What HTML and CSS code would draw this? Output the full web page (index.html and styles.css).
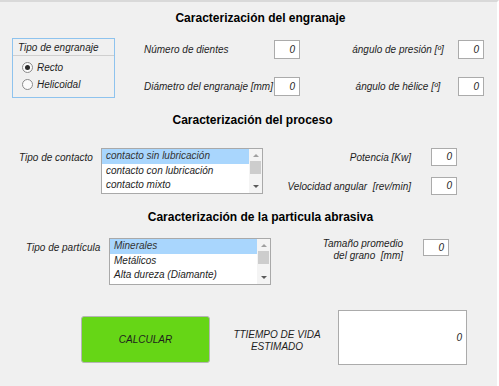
FILE: index.html
```html
<!DOCTYPE html>
<html lang="es">
<head>
<meta charset="utf-8">
<title>Tiempo de vida del engranaje</title>
<link rel="stylesheet" href="styles.css">
</head>
<body>
<div class="app">
  <h2 class="title t1">Caracterización del engranaje</h2>
  <div class="row r1">
    <div class="panel">
      <div class="panel-head">Tipo de engranaje</div>
      <label class="radio"><span class="dot checked"></span>Recto</label>
      <label class="radio"><span class="dot"></span>Helicoidal</label>
    </div>
    <div class="fields mid">
      <div class="field"><span class="lbl">Número de dientes</span><span class="num">0</span></div>
      <div class="field"><span class="lbl">Diámetro del engranaje [mm]</span><span class="num">0</span></div>
    </div>
    <div class="fields right1">
      <div class="field"><span class="lbl center">ángulo de presión [º]</span><span class="num">0</span></div>
      <div class="field"><span class="lbl center">ángulo de hélice [º]</span><span class="num">0</span></div>
    </div>
  </div>

  <h2 class="title t2">Caracterización del proceso</h2>
  <div class="row r2">
    <span class="side-lbl sl2">Tipo de contacto</span>
    <div class="listbox">
      <ul class="items">
        <li class="sel">contacto sin lubricación</li>
        <li>contacto con lubricación</li>
        <li>contacto mixto</li>
      </ul>
      <div class="scroll"><span class="arr up"></span><span class="thumb"></span><span class="arr down"></span></div>
    </div>
    <div class="fields right2">
      <div class="field"><span class="lbl rt">Potencia [Kw]</span><span class="num">0</span></div>
      <div class="field"><span class="lbl rt">Velocidad angular&nbsp; [rev/min]</span><span class="num">0</span></div>
    </div>
  </div>

  <h2 class="title t3">Caracterización de la particula abrasiva</h2>
  <div class="row r3">
    <span class="side-lbl sl3">Tipo de partícula</span>
    <div class="listbox lb3">
      <ul class="items">
        <li class="sel">Minerales</li>
        <li>Metálicos</li>
        <li>Alta dureza (Diamante)</li>
      </ul>
      <div class="scroll"><span class="arr up"></span><span class="thumb"></span><span class="arr down"></span></div>
    </div>
    <div class="field right3">
      <span class="lbl rt two">Tamaño promedio<br>del grano&nbsp; [mm]</span><span class="num">0</span>
    </div>
  </div>

  <div class="row r4">
    <button class="calc">CALCULAR</button>
    <span class="out-lbl">TTIEMPO DE VIDA<br>ESTIMADO</span>
    <div class="out">0</div>
  </div>
</div>
</body>
</html>
```

FILE: styles.css
```css
* { box-sizing: border-box; }
html, body { margin: 0; padding: 0; background: #f0f0f0; }
body { width: 499px; height: 386px; overflow: hidden; }

.app {
  width: 499px;
  height: 386px;
  background: #f0f0f0;
  border-top: 2px solid #d9d9d9;
  border-right: 2px solid #ffffff;
  font-family: "Liberation Sans", Arial, sans-serif;
  font-size: 10px;
  color: #1e1e1e;
}

.title {
  margin: 0;
  font-size: 12px;
  font-weight: bold;
  line-height: 14px;
  height: 14px;
  color: #000;
  text-align: center;
  white-space: nowrap;
}
.t1 { margin-top: 9px; padding-left: 24px; }
.t2 { margin-top: 15px; padding-left: 8px; }
.t3 { margin-top: 15px; padding-left: 24px; }

.row { display: flex; align-items: flex-start; }

/* Section 1 */
.r1 { margin-top: 13px; padding-left: 12px; height: 60px; }
.panel {
  width: 103px;
  height: 60px;
  border: 1px solid #8ec3ee;
  background: #f0f0f0;
}
.panel-head {
  height: 17px;
  line-height: 17px;
  padding-left: 5px;
  font-style: italic;
  border-bottom: 1px solid #cfcfcf;
}
.radio {
  display: flex;
  align-items: center;
  height: 17px;
  padding-left: 9px;
  font-style: italic;
}
.radio:first-of-type { margin-top: 3px; }
.dot {
  width: 11px;
  height: 11px;
  border-radius: 50%;
  border: 1px solid #8a8a8a;
  background: #fbfbfb;
  margin-right: 4px;
  position: relative;
  flex: none;
}
.dot.checked::after {
  content: "";
  position: absolute;
  left: 2px;
  top: 2px;
  width: 5px;
  height: 5px;
  border-radius: 50%;
  background: #2a2a2a;
}

.fields { display: flex; flex-direction: column; }
.field { display: flex; align-items: center; }
.lbl { font-style: italic; white-space: nowrap; }
.num {
  width: 26px;
  height: 19px;
  border: 1px solid #ababab;
  background: #fff;
  font-style: italic;
  text-align: right;
  padding-right: 4px;
  line-height: 17px;
  flex: none;
}

.mid { margin-left: 29px; padding-top: 2px; gap: 18px; }
.mid .lbl { width: 130px; }
.right1 { margin-left: 42px; padding-top: 2px; gap: 18px; }
.right1 .lbl { width: 112px; margin-right: 4px; text-align: center; }

/* Section 2 */
.r2 { margin-top: 21px; height: 47px; }
.side-lbl { font-style: italic; white-space: nowrap; }
.sl2 { padding-left: 19px; width: 101px; margin-top: 4px; }
.listbox {
  display: flex;
  width: 162px;
  height: 46px;
  border: 1px solid #a9a9a9;
  background: #fff;
}
.items {
  list-style: none;
  margin: 0;
  padding: 0;
  flex: 1;
  font-style: italic;
}
.items li {
  height: 14.6px;
  line-height: 14.6px;
  padding-left: 4px;
  white-space: nowrap;
}
.items li.sel { background: #a9d6fd; color: #333; }
.scroll {
  width: 13px;
  display: flex;
  flex-direction: column;
  align-items: center;
  background: #f4f4f4;
}
.arr { width: 0; height: 0; border-left: 3px solid transparent; border-right: 3px solid transparent; }
.arr.up { border-bottom: 3px solid #a0a0a0; margin-top: 5px; }
.arr.down { border-top: 3px solid #5a5a5a; margin-top: auto; margin-bottom: 5px; }
.thumb { width: 11px; height: 13px; background: #cdcdcd; margin-top: 4px; }

.right2 { margin-left: 8px; gap: 11px; }
.right2 .lbl { width: 140px; margin-right: 20px; }
.right2 .num { height: 18px; line-height: 16px; }
.rt { text-align: right; }

/* Section 3 */
.r3 { margin-top: 14px; height: 47px; }
.sl3 { padding-left: 26px; width: 109px; margin-top: 4px; }
.lb3 { height: 47px; }
.right3 { margin-left: 12px; align-items: flex-start; }
.right3 .lbl { width: 120px; margin-right: 20px; line-height: 12px; }
.right3 .num { height: 17px; line-height: 15px; margin-top: 1px; }

/* Section 4 */
.r4 { margin-top: 25px; align-items: center; height: 55px; }
.calc {
  margin-left: 81px;
  width: 129px;
  height: 47px;
  margin-top: 3px;
  background: #66d616;
  border: 1px solid #b5b5b5;
  border-radius: 3px;
  font-family: "Liberation Sans", Arial, sans-serif;
  font-size: 10px;
  font-style: italic;
  color: #1e1e1e;
  padding: 0;
}
.out-lbl {
  width: 110px;
  margin-left: 12px;
  margin-right: 6px;
  margin-top: 6px;
  text-align: center;
  font-style: italic;
  line-height: 12px;
  white-space: nowrap;
}
.out {
  width: 129px;
  height: 55px;
  border: 1px solid #ababab;
  background: #fff;
  font-style: italic;
  text-align: right;
  padding-right: 4px;
  line-height: 53px;
}
```
